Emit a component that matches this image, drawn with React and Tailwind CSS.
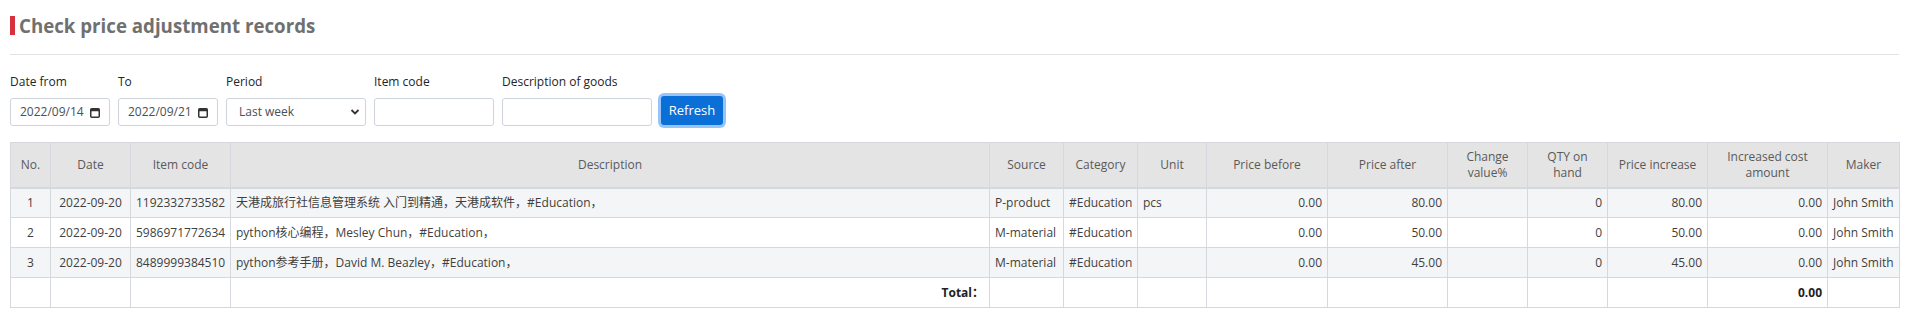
import { useState } from "react";

const columns = [
  { key: "no", label: "No.", w: 40, align: "text-center" },
  { key: "date", label: "Date", w: 80, align: "text-center" },
  { key: "code", label: "Item code", w: 100, align: "text-center" },
  { key: "desc", label: "Description", w: 759, align: "text-left" },
  { key: "source", label: "Source", w: 74, align: "text-left" },
  { key: "category", label: "Category", w: 74, align: "text-left" },
  { key: "unit", label: "Unit", w: 69, align: "text-left" },
  { key: "before", label: "Price before", w: 121, align: "text-right" },
  { key: "after", label: "Price after", w: 120, align: "text-right" },
  { key: "change", label: ["Change", "value%"], w: 80, align: "text-right" },
  { key: "qty", label: ["QTY on", "hand"], w: 80, align: "text-right" },
  { key: "increase", label: "Price increase", w: 100, align: "text-right" },
  { key: "cost", label: ["Increased cost", "amount"], w: 120, align: "text-right" },
  { key: "maker", label: "Maker", w: 72, align: "text-left" },
];

const records = [
  {
    no: "1",
    date: "2022-09-20",
    code: "1192332733582",
    desc: "天港成旅行社信息管理系统 入门到精通，天港成软件，#Education，",
    source: "P-product",
    category: "#Education",
    unit: "pcs",
    before: "0.00",
    after: "80.00",
    change: "",
    qty: "0",
    increase: "80.00",
    cost: "0.00",
    maker: "John Smith",
  },
  {
    no: "2",
    date: "2022-09-20",
    code: "5986971772634",
    desc: "python核心编程，Mesley Chun，#Education，",
    source: "M-material",
    category: "#Education",
    unit: "",
    before: "0.00",
    after: "50.00",
    change: "",
    qty: "0",
    increase: "50.00",
    cost: "0.00",
    maker: "John Smith",
  },
  {
    no: "3",
    date: "2022-09-20",
    code: "8489999384510",
    desc: "python参考手册，David M. Beazley，#Education，",
    source: "M-material",
    category: "#Education",
    unit: "",
    before: "0.00",
    after: "45.00",
    change: "",
    qty: "0",
    increase: "45.00",
    cost: "0.00",
    maker: "John Smith",
  },
];

const CalendarIcon = () => (
  <svg width="10" height="11" viewBox="0 0 10 11" className="shrink-0">
    <rect x="0.75" y="1.75" width="8.5" height="8.5" rx="1" fill="none" stroke="#333" strokeWidth="1.5" />
    <rect x="0.75" y="1.75" width="8.5" height="2.5" fill="#333" />
  </svg>
);

const Chevron = () => (
  <svg width="10" height="8" viewBox="0 0 10 8" className="shrink-0">
    <polyline points="1.5,2 5,5.5 8.5,2" fill="none" stroke="#333" strokeWidth="1.8" />
  </svg>
);

const Field = ({ label, children }) => (
  <div className="flex flex-col">
    <label className="text-[12px] leading-[18px] text-[#212529] mb-[7px]">{label}</label>
    {children}
  </div>
);

const DateBox = ({ value }) => (
  <div className="flex items-center justify-between w-[100px] h-[28px] border border-[#ced4da] rounded-[3px] bg-white pl-[9px] pr-[9px] text-[12px] text-[#495057]">
    <span>{value}</span>
    <CalendarIcon />
  </div>
);

const App = () => {
  const [period, setPeriod] = useState("Last week");

  return (
    <div className="min-h-[319px] bg-white px-[10px] pt-[16px] font-['Open_Sans','Noto_Sans_CJK_SC',sans-serif]">
      <div className="flex items-center h-[19px]">
        <div className="w-[5px] h-[19px] bg-[#d9303e]" />
        <h2 className="ml-[4px] text-[18.7px] leading-[19px] font-bold text-[#707070]">
          Check price adjustment records
        </h2>
      </div>
      <div className="mt-[19px] h-px bg-[#e3e3e3]" />

      <div className="flex items-end gap-2 mt-[18px]">
        <Field label="Date from">
          <DateBox value="2022/09/14" />
        </Field>
        <Field label="To">
          <DateBox value="2022/09/21" />
        </Field>
        <Field label="Period">
          <div className="flex items-center justify-between w-[140px] h-[28px] border border-[#ced4da] rounded-[3px] bg-white pl-[12px] pr-[5px] text-[12px] text-[#495057]">
            <span>{period}</span>
            <Chevron />
          </div>
        </Field>
        <Field label="Item code">
          <div className="w-[120px] h-[28px] border border-[#ced4da] rounded-[3px] bg-white" />
        </Field>
        <Field label="Description of goods">
          <div className="w-[150px] h-[28px] border border-[#ced4da] rounded-[3px] bg-white" />
        </Field>
        <button
          onClick={() => setPeriod("Last week")}
          className="ml-px mb-[1px] h-[29px] w-[62px] rounded-[3px] bg-[#0b6fd8] text-white text-[13px] shadow-[0_0_0_3px_rgba(66,150,245,0.55)]"
        >
          Refresh
        </button>
      </div>

      <table className="mt-[16px] w-[1889px] table-fixed border-collapse text-[12px] text-[#3f3f3f]">
        <colgroup>
          {columns.map((c) => (
            <col key={c.key} style={{ width: c.w }} />
          ))}
        </colgroup>
        <thead>
          <tr className="bg-[#e4e4e4]">
            {columns.map((c) => (
              <th
                key={c.key}
                className="h-[45px] border border-[#d5d8dc] border-b-2 px-[5px] font-normal text-center leading-[16px] text-[#5a5a5a]"
              >
                {Array.isArray(c.label) ? (
                  <>
                    {c.label[0]}
                    <br />
                    {c.label[1]}
                  </>
                ) : (
                  c.label
                )}
              </th>
            ))}
          </tr>
        </thead>
        <tbody>
          {records.map((r, i) => (
            <tr key={r.no} className={i % 2 === 0 ? "bg-[#f4f5f6]" : "bg-white"}>
              {columns.map((c) => (
                <td
                  key={c.key}
                  className={`h-[30px] border border-[#d5d8dc] px-[5px] whitespace-nowrap leading-[18px] ${c.align}`}
                >
                  {r[c.key]}
                </td>
              ))}
            </tr>
          ))}
          <tr className="bg-white">
            {columns.map((c) => (
              <td
                key={c.key}
                className={`h-[30px] border border-[#d5d8dc] px-[5px] whitespace-nowrap font-bold text-[#222] ${
                  c.key === "desc" ? "text-right" : c.align
                }`}
              >
                {c.key === "desc" ? "Total：" : c.key === "cost" ? "0.00" : ""}
              </td>
            ))}
          </tr>
        </tbody>
      </table>
    </div>
  );
};

export default App;
